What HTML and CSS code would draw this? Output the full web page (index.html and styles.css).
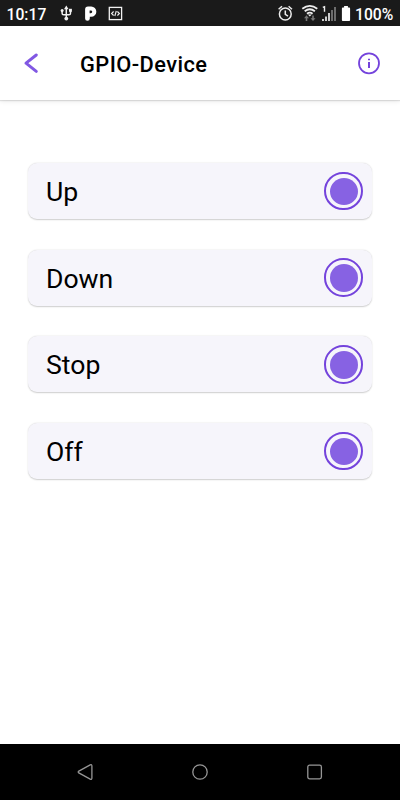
FILE: index.html
```html
<!DOCTYPE html>
<html lang="en">
<head>
<meta charset="utf-8">
<title>GPIO-Device</title>
<link rel="stylesheet" href="styles.css">
</head>
<body>
<div class="status">
  <span class="clock">10:17</span>
  <svg class="notify" width="64" height="26" viewBox="60 0 64 26" fill="none" stroke="#f2f2f2" stroke-width="1.5">
    <path d="M66.300 8v10M62.100 10.500v2.700q0 1.600 1.600 1.600h5.200q1.600 0 1.600-1.600V11"/>
    <path d="M64 9.200l2.300-3.600 2.300 3.600z" fill="#f2f2f2" stroke="none"/>
    <circle cx="66.300" cy="18.600" r="1.900" fill="#f2f2f2" stroke="none"/>
    <circle cx="62.100" cy="10.500" r="1.500" fill="#f2f2f2" stroke="none"/>
    <path d="M69 8.800h2.900v3H69z" fill="#f2f2f2" stroke="none"/>
    <path d="M88 6.500h3.200a4.900 4.900 0 0 1 0 10.300h-1.400v1.700a2.350 2.350 0 0 1-4.700 0V9.400a2.900 2.900 0 0 1 2.900-2.900zM89.600 10.400v2.900h1.200a1.450 1.450 0 0 0 0-2.900z" fill="#fff" fill-rule="evenodd" stroke="none"/>
    <rect x="109.300" y="7.400" width="12.300" height="12.200" stroke-width="1.300"/>
    <path d="M113.600 11.500l-2 2 2 2M117.400 11.500l2 2-2 2M116.300 11l-1.500 5" stroke-width="1.100"/>
  </svg>
  <svg class="system" width="76" height="26" viewBox="276 0 76 26" fill="none" stroke="#ededed">
    <circle cx="285.300" cy="14" r="5.900" stroke-width="1.500"/>
    <path d="M285.300 10.500v3.900l2.700 1.700M278.600 9.200l3.400-2.900M292 9.200l-3.400-2.900" stroke-width="1.500"/>
    <path d="M302.300 8.700q7.500-5.600 15 0M304.700 11.300q5.100-4 10.200 0M307 13.700q2.800-2.200 5.600 0" stroke-width="1.800"/>
    <path d="M307.800 14.600h4l-2 2z" fill="#eee" stroke="none"/>
    <path d="M304 18.200l2.500-2.900 2.500 2.900h-1.700V21h-1.600v-2.800zM310.500 18.200l2.500 2.900 2.500-2.900h-1.700v-2.800h-1.600v2.800z" fill="#777" stroke="none"/>
    <path d="M322.800 7.400l1.700-.7v5.100" stroke-width="1.400"/>
    <path d="M323 21v-2M326 21v-4.500M329 21v-8" stroke-width="1.700"/>
    <path d="M332 21V10M335 21V7" stroke="#777" stroke-width="1.800"/>
    <path d="M344.100 6h3.800v1.500h1.300q.9 0 .9.900v11.700q0 .9-.9.900h-6.400q-.9 0-.9-.9V8.400q0-.9.900-.9h1.300z" fill="#fff" stroke="none"/>
  </svg>
  <span class="charge">100%</span>
</div>
<header class="header">
  <svg class="back" width="16" height="22" viewBox="0 0 16 22"><path d="M13.300 3L3 11.200l10.300 8.200" fill="none" stroke="#8158e3" stroke-width="3" stroke-linecap="round" stroke-linejoin="round"/></svg>
  <h1 class="title">GPIO-Device</h1>
  <svg class="info" width="24" height="24" viewBox="0 0 24 24"><circle cx="12" cy="12.300" r="10" fill="none" stroke="#7443dc" stroke-width="1.800"/><path d="M11 7.700h2v1.500h-2zM11 11h2v6h-2z" fill="#7443dc"/></svg>
</header>
<main class="controls">
  <div class="card"><span>Up</span><button class="push" aria-label="Up"></button></div>
  <div class="card"><span>Down</span><button class="push" aria-label="Down"></button></div>
  <div class="card"><span>Stop</span><button class="push" aria-label="Stop"></button></div>
  <div class="card"><span>Off</span><button class="push" aria-label="Off"></button></div>
</main>
<nav class="navbar">
  <svg width="18" height="18" viewBox="0 0 18 18"><path d="M2.800 8.100L14.200 1.900q1.700-.7 1.700 1v12.200q0 1.700-1.700 1L2.800 9.900q-1.200-.9 0-1.800z"/></svg>
  <svg width="18" height="18" viewBox="0 0 18 18"><circle cx="9" cy="9" r="7.200"/></svg>
  <svg width="18" height="18" viewBox="0 0 18 18"><rect x="1.800" y="2.200" width="13.600" height="13.600" rx="1.800"/></svg>
</nav>
</body>
</html>
```

FILE: styles.css
```css
* { box-sizing: border-box; }
body {
  margin: 0;
  height: 800px;
  display: flex;
  flex-direction: column;
  background: #fff;
  font-family: Roboto, "Liberation Sans", sans-serif;
  color: #000;
}
.status {
  height: 26px;
  flex: none;
  display: flex;
  align-items: center;
  padding: 0 7px 0 6.500px;
  background: #1a1a1a;
  color: #fff;
  font-size: 15.700px;
  font-weight: 500;
  line-height: 26px;
}
.clock { width: 53.500px; padding-top: 3px; }
.system { margin-left: auto; }
.charge { width: 41px; padding: 3px 0 0 3px; white-space: nowrap; }
.header {
  height: 74px;
  flex: none;
  display: flex;
  align-items: center;
  padding: 0 19px 0 23px;
  box-shadow: 0 1px 1px rgba(0, 0, 0, .1), 0 1px 5px rgba(0, 0, 0, .1);
}
.title {
  margin: 3px 0 0 41px;
  font-size: 21.800px;
  font-weight: 500;
  line-height: 28px;
  letter-spacing: .45px;
}
.info { margin-left: auto; }
.controls {
  flex: 1;
  display: flex;
  flex-direction: column;
  gap: 30.600px;
  padding: 63px 28px 0;
}
.card {
  height: 56.200px;
  display: flex;
  align-items: center;
  justify-content: space-between;
  padding: 1px 9.500px 0 18px;
  border-radius: 9px;
  background: #f6f5fb;
  box-shadow: 0 .5px 1.500px rgba(0, 0, 0, .2);
  font-size: 26.600px;
}
.card + .card { margin-top: -.2px; }
.push {
  width: 38.500px;
  height: 38.500px;
  margin-top: -1px;
  padding: 3.500px;
  border: 2px solid #7443dc;
  border-radius: 50%;
  background: #8762e3 content-box;
}
.navbar {
  height: 56px;
  flex: none;
  display: flex;
  justify-content: space-between;
  align-items: center;
  padding: 0 76px;
  background: #000;
}
.navbar svg { fill: none; stroke: #969696; stroke-width: 1.300; }
```
